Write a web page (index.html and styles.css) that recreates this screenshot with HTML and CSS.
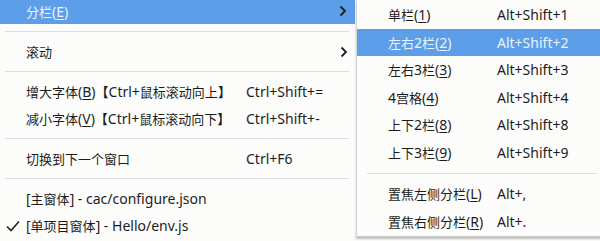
FILE: index.html
```html
<!DOCTYPE html>
<html>
<head>
  <title>Menu</title>
  <link rel="stylesheet" href="styles.css">
</head>
<body>

  <div class="screen">
    <div class="menu">
      <div class="item first active">
        <span class="check"></span>
        <span class="label">分栏<span class="en">(<u>E</u>)</span></span>
        <span class="keys"></span>
        <svg class="arrow" width="8" height="12" viewBox="0 0 8 12"><path d="M1.5 1.5 L6 6 L1.5 10.5" /></svg>
      </div>
      <div class="sep"></div>
      <div class="item">
        <span class="check"></span>
        <span class="label">滚动</span>
        <span class="keys"></span>
        <svg class="arrow" width="8" height="12" viewBox="0 0 8 12"><path d="M1.5 1.5 L6 6 L1.5 10.5" /></svg>
      </div>
      <div class="sep"></div>
      <div class="item">
        <span class="check"></span>
        <span class="label">增大字体<span class="en">(<u>B</u>)</span><b>【</b><span class="en">Ctrl+</span>鼠标滚动向上<b>】</b></span>
        <span class="keys en">Ctrl+Shift+=</span>
      </div>
      <div class="item">
        <span class="check"></span>
        <span class="label">减小字体<span class="en">(<u>V</u>)</span><b>【</b><span class="en">Ctrl+</span>鼠标滚动向下<b>】</b></span>
        <span class="keys en">Ctrl+Shift+-</span>
      </div>
      <div class="sep"></div>
      <div class="item">
        <span class="check"></span>
        <span class="label">切换到下一个窗口</span>
        <span class="keys en">Ctrl+F6</span>
      </div>
      <div class="sep"></div>
      <div class="item">
        <span class="check"></span>
        <span class="label"><span class="en">[</span>主窗体<span class="en">] - cac/configure.json</span></span>
        <span class="keys"></span>
      </div>
      <div class="item">
        <span class="check">
          <svg width="14" height="12" viewBox="0 0 14 12"><path d="M1 6.5 L5 10.5 L13 1.5" /></svg>
        </span>
        <span class="label"><span class="en">[</span>单项目窗体<span class="en">] - Hello/env.js</span></span>
        <span class="keys"></span>
      </div>
    </div>

    <div class="submenu">
      <div class="sub-item"><span class="label">单栏<span class="en">(<u>1</u>)</span></span><span class="keys en">Alt+Shift+1</span></div>
      <div class="sub-item active"><span class="label">左右<span class="en">2</span>栏<span class="en">(<u>2</u>)</span></span><span class="keys en">Alt+Shift+2</span></div>
      <div class="sub-item"><span class="label">左右<span class="en">3</span>栏<span class="en">(<u>3</u>)</span></span><span class="keys en">Alt+Shift+3</span></div>
      <div class="sub-item"><span class="label"><span class="en">4</span>宫格<span class="en">(<u>4</u>)</span></span><span class="keys en">Alt+Shift+4</span></div>
      <div class="sub-item"><span class="label">上下<span class="en">2</span>栏<span class="en">(<u>8</u>)</span></span><span class="keys en">Alt+Shift+8</span></div>
      <div class="sub-item"><span class="label">上下<span class="en">3</span>栏<span class="en">(<u>9</u>)</span></span><span class="keys en">Alt+Shift+9</span></div>
      <div class="sub-sep"></div>
      <div class="sub-item"><span class="label">置焦左侧分栏<span class="en">(<u>L</u>)</span></span><span class="keys en">Alt+,</span></div>
      <div class="sub-item"><span class="label">置焦右侧分栏<span class="en">(<u>R</u>)</span></span><span class="keys en">Alt+.</span></div>
    </div>
  </div>

</body>
</html>
```

FILE: styles.css
```css
body {
  margin: 0;
  padding: 0;
  background-color: #fcfcfb;
  font-family: "Noto Sans", "Noto Sans CJK SC", sans-serif;
  font-size: 13px;
  color: #1c1c1c;
  overflow: hidden;
}

.screen {
  display: flex;
  align-items: flex-start;
  width: 600px;
  height: 241px;
  overflow: hidden;
}

.en {
  font-size: 14px;
}

u {
  text-decoration-thickness: 1px;
  text-underline-offset: 2px;
}

b {
  font-weight: bold;
}

/* main menu */
.menu {
  width: 356px;
  flex-shrink: 0;
  margin-top: -2px;
  display: flex;
  flex-direction: column;
}

.item {
  height: 27px;
  display: grid;
  grid-template-columns: 26px 220px 1fr 20px;
  align-items: center;
  white-space: nowrap;
}

.item.active {
  background-color: #5c9ee7;
  color: #eaf2fc;
  margin-right: 1px;
  height: 26px;
  margin-bottom: 1px;
}

.check {
  display: flex;
  justify-content: center;
}

.check svg path {
  fill: none;
  stroke: #222;
  stroke-width: 1.6;
}

.arrow {
  justify-self: start;
  margin-left: 4px;
}

.arrow path {
  fill: none;
  stroke: #1c1c1c;
  stroke-width: 1.8;
}

.sep {
  height: 13px;
  display: flex;
  align-items: center;
  padding: 0 7px 0 5px;
}

.sep::after {
  content: "";
  flex: 1;
  height: 1px;
  background-color: #dcdcdc;
}

/* sub menu */
.submenu {
  width: 250px;
  flex-shrink: 0;
  height: 235px;
  padding-top: 1px;
  border-left: 1px solid #d6d6d6;
  border-bottom: 1px solid #c9c9c9;
  box-shadow: 0 2px 2px rgba(0, 0, 0, 0.25);
  background-color: #fcfcfb;
  display: flex;
  flex-direction: column;
}

.sub-item {
  height: 27.5px;
  display: grid;
  grid-template-columns: 109px 1fr;
  align-items: center;
  padding-left: 31px;
  white-space: nowrap;
}

.sub-item.active {
  background-color: #5c9ee7;
  color: #eaf2fc;
}

.sub-sep {
  height: 14px;
  display: flex;
  align-items: center;
  padding: 0 10px;
}

.sub-sep::after {
  content: "";
  flex: 1;
  height: 1px;
  background-color: #dcdcdc;
}
```
